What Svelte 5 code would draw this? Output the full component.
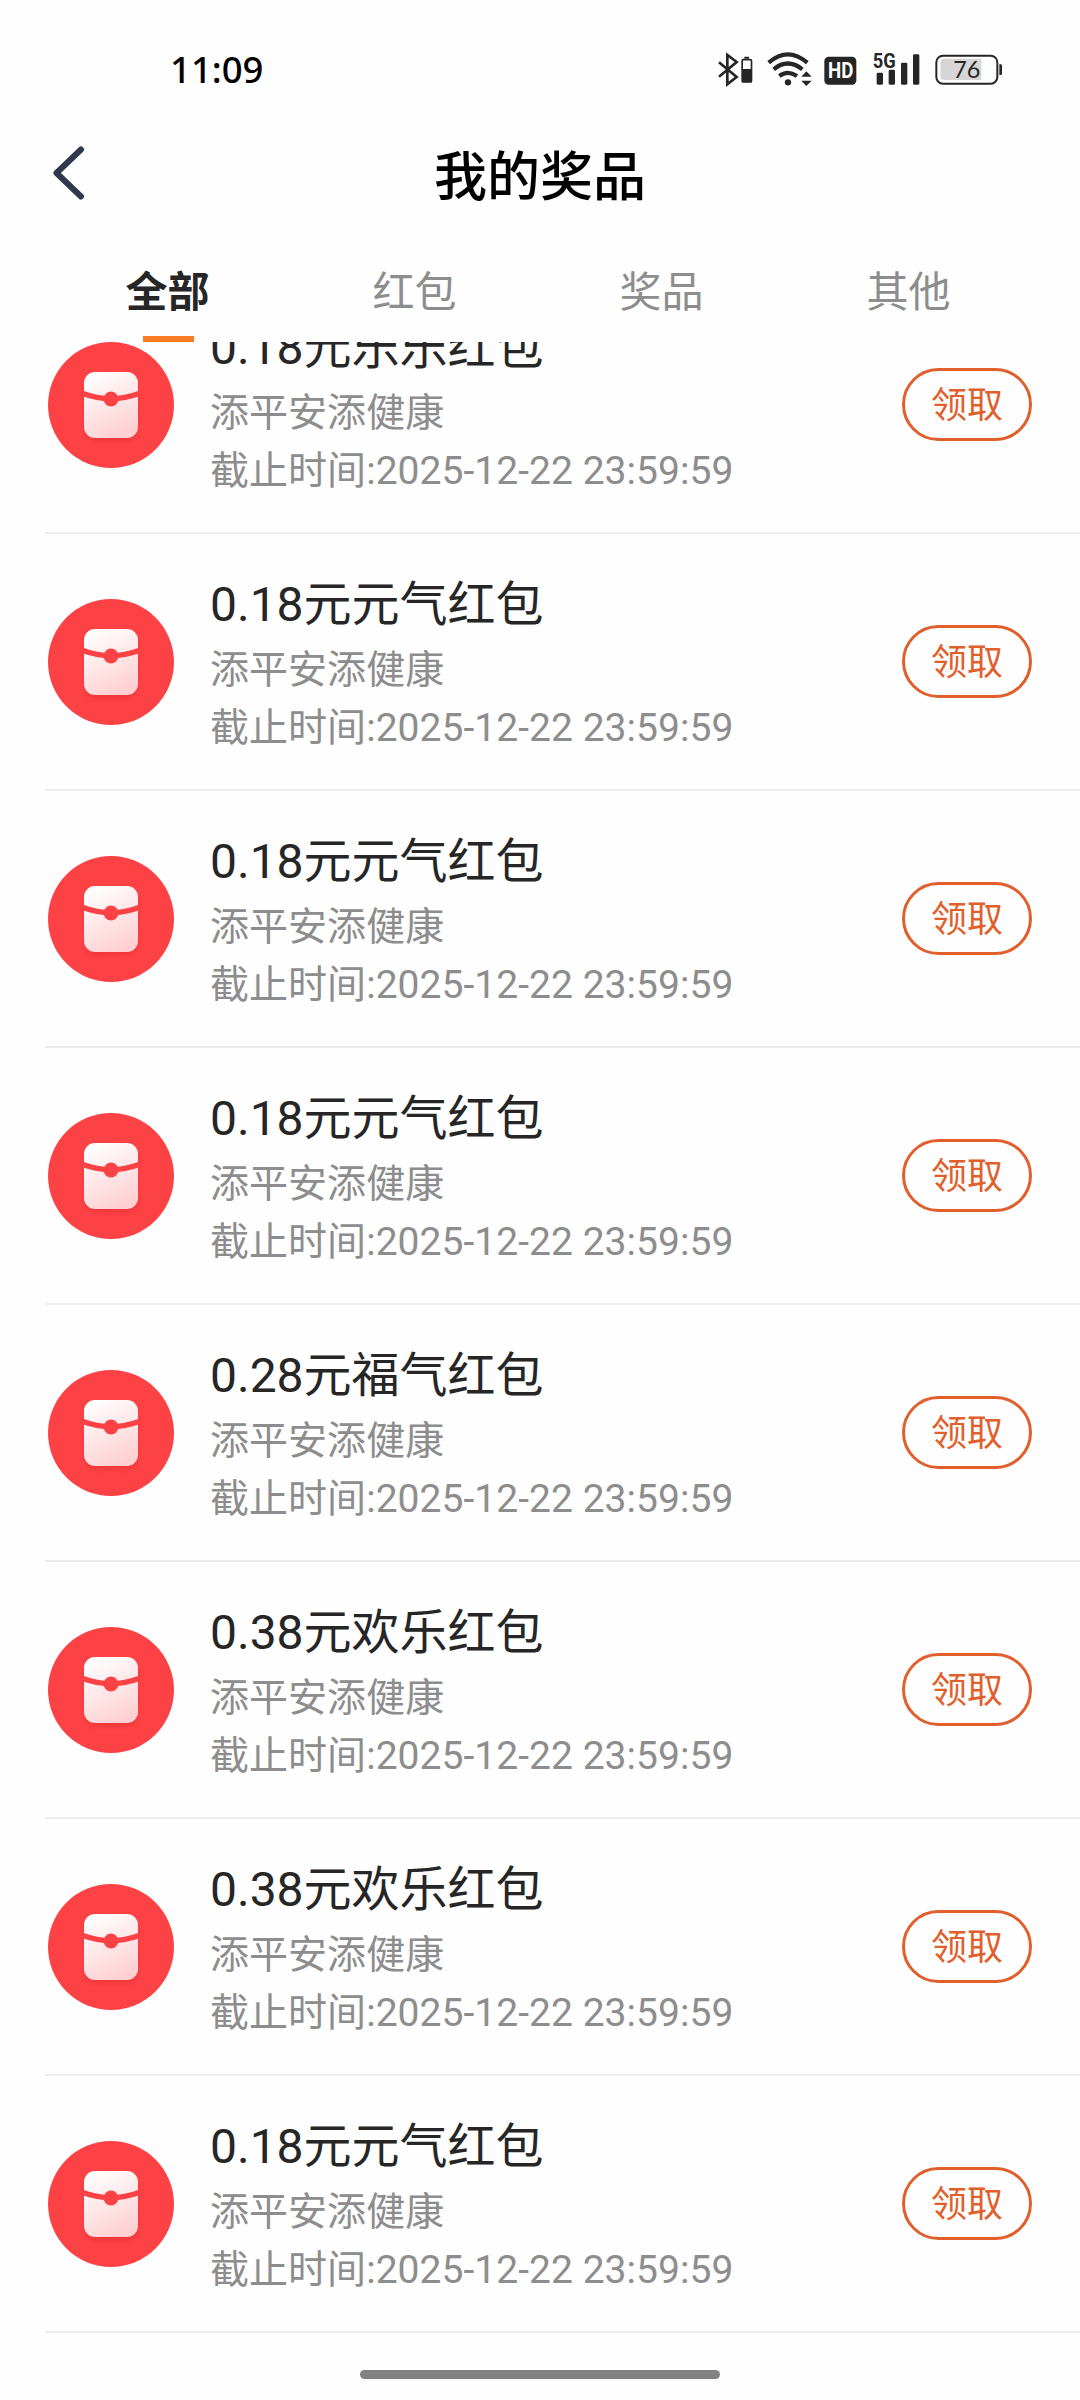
<script>
  const tabs = ["全部", "红包", "奖品", "其他"];
  let current = $state(0);

  const source = "添平安添健康";
  const deadline = "2025-12-22 23:59:59";
  const prizes = [
    { amount: "0.18", name: "乐乐红包" },
    { amount: "0.18", name: "元气红包" },
    { amount: "0.18", name: "元气红包" },
    { amount: "0.18", name: "元气红包" },
    { amount: "0.28", name: "福气红包" },
    { amount: "0.38", name: "欢乐红包" },
    { amount: "0.38", name: "欢乐红包" },
    { amount: "0.18", name: "元气红包" },
  ];
</script>

<div class="screen">
  <div class="status">
    <span class="time">11:09</span>
    <!-- bluetooth, wifi, HD, 5G signal, battery -->
    <svg class="status-icons" viewBox="80 55 864 120">
      <g fill="none" stroke="#262626" stroke-width="8">
        <path d="M86 95 L139 139 L111 161 V73 L139 94 L86 138" />
        <rect x="155.500" y="87" width="28" height="67" rx="4" stroke-width="5" />
      </g>
      <path d="M162 78h14v6h-14z M155 115h29v40h-29z" fill="#262626" />
      <g fill="none" stroke="#262626" stroke-width="12.500">
        <path d="M235 96 Q292 46 351 96" />
        <path d="M250 116 Q292 81 336 116" />
        <path d="M267 136 Q292 117 320 136" />
      </g>
      <circle cx="293" cy="155" r="9.500" fill="#262626" />
      <path d="M333 138 L348 122 L364 138z M333 150 L348 166 L364 150z" fill="#262626" />
      <rect x="402" y="78" width="96" height="84" rx="13" fill="#262626" />
      <text x="451" y="143" class="hd" textLength="76" lengthAdjust="spacingAndGlyphs">HD</text>
      <text x="547" y="111" class="net" textLength="69" lengthAdjust="spacingAndGlyphs">5G</text>
      <g fill="#262626">
        <rect x="559" y="126" width="19" height="36" rx="4" />
        <rect x="595" y="117" width="19" height="45" rx="4" />
        <rect x="632" y="96" width="19" height="66" rx="4" />
        <rect x="668" y="71" width="19" height="91" rx="4" />
      </g>
      <path d="M762 84 H873 V148 H762 Q750 148 750 136 V96 Q750 84 762 84z" fill="#d6d6d6" />
      <rect x="738" y="75" width="183" height="84" rx="20" fill="none" stroke="#262626" stroke-width="6" />
      <path d="M927 101 h4 q4 0 4 4 v24 q0 4 -4 4 h-4z" fill="#262626" />
      <text x="829" y="143" class="level">76</text>
    </svg>
  </div>

  <header>
    <svg class="back" viewBox="0 0 34 56">
      <path d="M30 4.500 L5.500 28 L30 51.500" />
    </svg>
    <h1>我的奖品</h1>
  </header>

  <nav>
    {#each tabs as tab, i}
      <button class="tab" class:active={i === current} onclick={() => (current = i)}>{tab}</button>
    {/each}
  </nav>

  <div class="list">
    {#each prizes as prize}
      <div class="row">
        <svg class="icon" viewBox="0 0 126 126">
          <defs>
            <linearGradient id="paper" x1="0.2" y1="0" x2="0.6" y2="1">
              <stop offset="0" stop-color="#fff" />
              <stop offset="1" stop-color="#fed0d2" />
            </linearGradient>
            <filter id="soft" x="-30%" y="-30%" width="160%" height="160%">
              <feGaussianBlur stdDeviation="2.500" />
            </filter>
          </defs>
          <circle cx="63" cy="63" r="63" fill="#fd4245" />
          <rect x="37" y="34" width="52" height="65" rx="11" fill="#d8262c" opacity="0.450" filter="url(#soft)" />
          <rect x="36" y="30" width="54" height="66" rx="11" fill="url(#paper)" />
          <path d="M35 51.500 Q63 62 91 51.500" fill="none" stroke="#fd4245" stroke-width="5.500" />
          <circle cx="63" cy="57" r="7.400" fill="#fd4245" />
        </svg>
        <div class="info">
          <div class="name">{prize.amount}元{prize.name}</div>
          <div class="sub">{source}</div>
          <div class="sub">截止时间:{deadline}</div>
        </div>
        <button class="claim">领取</button>
      </div>
    {/each}
  </div>

  <div class="home"></div>
</div>

<style>
  :global(body) {
    background: #fefefe;
  }

  .screen {
    display: flex;
    flex-direction: column;
    width: 1080px;
    height: 2400px;
    overflow: hidden;
    background: #fefefe;
    font-family: Roboto, "Noto Sans CJK SC", sans-serif;
  }

  button {
    padding: 0;
    border: 0;
    background: none;
    font-family: inherit;
  }

  .status {
    display: flex;
    justify-content: space-between;
    align-items: center;
    height: 138px;
    padding: 0 75px 0 170px;
  }

  .time {
    font-family: "Noto Sans", sans-serif;
    font-size: 36.5px;
    font-weight: 500;
    line-height: 40px;
    color: #000;
  }

  .status-icons {
    width: 288px;
    height: 40px;
  }

  .hd,
  .net {
    font-family: Roboto, sans-serif;
    font-weight: 700;
  }

  .hd {
    font-size: 66px;
    text-anchor: middle;
    fill: #fff;
  }

  .net {
    font-size: 61px;
    fill: #262626;
  }

  .level {
    font-family: Lato, sans-serif;
    font-size: 70px;
    text-anchor: middle;
    fill: #262626;
  }

  header {
    display: grid;
    grid-template-columns: 120px 1fr 120px;
    align-items: center;
    height: 78px;
  }

  .back {
    width: 34px;
    height: 56px;
    margin: -8px 0 0 51px;
  }

  .back path {
    fill: none;
    stroke: #2f394d;
    stroke-width: 6;
    stroke-linecap: round;
    stroke-linejoin: round;
  }

  h1 {
    margin: 3px 0 0;
    font-size: 53px;
    font-weight: 500;
    line-height: 75px;
    text-align: center;
    color: #000;
  }

  nav {
    display: flex;
    height: 126px;
    padding: 0 48px 0 44px;
  }

  .tab {
    display: flex;
    flex: 1;
    flex-direction: column;
    align-items: center;
    justify-content: space-between;
    padding-top: 46px;
    font-size: 42px;
    line-height: 62px;
    color: #8d8d8d;
  }

  .active {
    font-weight: 700;
    color: #262626;
  }

  .active::after {
    content: "";
    width: 51px;
    height: 6px;
    margin-left: 1px;
    background: #fb7a24;
  }

  .list {
    display: flex;
    flex-direction: column;
    justify-content: flex-end;
    height: 1991px;
    overflow: hidden;
  }

  .row {
    display: flex;
    flex: none;
    align-items: center;
    box-sizing: border-box;
    height: 257px;
    margin-left: 45px;
    padding: 1px 48px 0 3px;
    border-bottom: 2px solid #ededed;
  }

  .icon {
    flex: none;
    width: 126px;
    height: 126px;
  }

  .info {
    flex: 1;
    margin: 2px 0 0 36px;
  }

  .name {
    font-size: 48px;
    line-height: 72px;
    color: #262626;
  }

  .sub {
    font-size: 39px;
    line-height: 58px;
    letter-spacing: 0.04px;
    color: #8d8d8d;
  }

  .claim {
    box-sizing: border-box;
    width: 130px;
    height: 73px;
    margin-top: -1px;
    padding-top: 4px;
    border: 3px solid #e05f2c;
    border-radius: 37px;
    font-size: 36px;
    line-height: 63px;
    color: #e05f2c;
  }

  .home {
    width: 360px;
    height: 9px;
    margin: 37px auto 0;
    border-radius: 5px;
    background: #828282;
  }
</style>
